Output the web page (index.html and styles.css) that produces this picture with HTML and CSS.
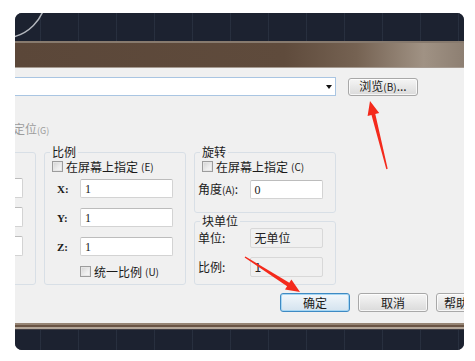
FILE: index.html
```html
<!DOCTYPE html>
<html>
<head>
<meta charset="utf-8">
<link rel="stylesheet" href="styles.css">
</head>
<body>
<div class="frame">
  <div class="canvas canvas-top">
    <svg class="arc" width="449" height="28" viewBox="0 0 449 28"><circle cx="-12" cy="-18" r="43" fill="none" stroke="#b3b7bd" stroke-width="1.5"/></svg>
  </div>
  <div class="titlebar"></div>
  <div class="dialog">
    <div class="path-row">
      <div class="combo"><span class="caret"></span></div>
      <button class="btn browse">浏览<small>(B)</small>...</button>
    </div>
    <div class="geo">定位<small>(G)</small></div>
    <div class="groups">
      <div class="grp-ins">
        <span class="input"></span>
        <span class="input"></span>
        <span class="input"></span>
      </div>
      <fieldset class="grp grp-scale">
        <legend>比例</legend>
        <div class="chk"><span class="box"></span>在屏幕上指定<small>(E)</small></div>
        <div class="row xyz first"><span class="lbl serif">X:</span><span class="input">1</span></div>
        <div class="row xyz"><span class="lbl serif">Y:</span><span class="input">1</span></div>
        <div class="row xyz"><span class="lbl serif">Z:</span><span class="input">1</span></div>
        <div class="chk uniform"><span class="box"></span>统一比例<small>(U)</small></div>
      </fieldset>
      <div class="col">
        <fieldset class="grp grp-rot">
          <legend>旋转</legend>
          <div class="chk"><span class="box"></span>在屏幕上指定<small>(C)</small></div>
          <div class="row side angle"><span class="lbl">角度<small>(A)</small>:</span><span class="input">0</span></div>
        </fieldset>
        <fieldset class="grp grp-unit">
          <legend>块单位</legend>
          <div class="row side"><span class="lbl">单位:</span><span class="input ro">无单位</span></div>
          <div class="row side second"><span class="lbl">比例:</span><span class="input ro">1</span></div>
        </fieldset>
      </div>
    </div>
    <div class="actions">
      <button class="btn primary">确定</button>
      <button class="btn">取消</button>
      <button class="btn help">帮助</button>
    </div>
  </div>
  <div class="canvas canvas-bottom"></div>
</div>
<svg class="arrows" width="475" height="361" viewBox="0 0 475 361">
  <polygon fill="#f42a1c" points="370,101 379.2,113.1 375.3,114.1 387.7,168.8 386.3,169.2 371.5,115.1 367.6,116.1"/>
  <polygon fill="#f42a1c" points="300,292 285,289.6 287.1,286.2 244.6,257.6 245.4,256.4 289.3,282.8 291.4,279.4"/>
</svg>
</body>
</html>
```

FILE: styles.css
```css
* { box-sizing: border-box; }
html, body { margin: 0; padding: 0; background: #fff; }
body {
  font-family: "Noto Sans CJK SC", "Noto Sans", sans-serif;
  font-size: 12px;
  line-height: 14px;
  color: #1a1a1a;
  width: 475px;
  height: 361px;
  overflow: hidden;
  position: relative;
}
small { font-size: 10px; }

.frame {
  margin: 13px 0 0 15px;
  width: 449px;
  height: 337px;
  border-radius: 7px;
  overflow: hidden;
  display: flex;
  flex-direction: column;
  background: #1c2230;
}
.canvas {
  background-color: #1c2230;
  background-image: linear-gradient(90deg, rgba(120, 135, 160, 0.13) 1px, transparent 1px);
  background-size: 38px 100%;
  background-position: 25px 0;
}
.canvas-top { height: 28px; flex: none; }
.arc { display: block; }
.titlebar {
  height: 27px;
  flex: none;
  border-top: 2px solid #877a6e;
  border-bottom: 1px solid #a69b91;
  background: linear-gradient(90deg, #5b4739 0%, #5f4b3c 60%, #756252 76%, #a09284 91%, #8d7f72 100%);
}
.canvas-bottom {
  height: 27px;
  flex: none;
  background:
    linear-gradient(#958474 0 2px, #6a5444 2px 4px, #b3a699 4px 6px, #3f3d44 6px 7px, transparent 7px),
    linear-gradient(90deg, rgba(120, 135, 160, 0.13) 1px, transparent 1px) 25px 0 / 38px 100%,
    #1c2230;
}

.dialog {
  flex: 1;
  background: #f0f0f0;
  padding-top: 9px;
  overflow: hidden;
}
.path-row { display: flex; align-items: center; height: 19px; }
.combo {
  margin-left: -2px;
  width: 323px;
  height: 19px;
  background: #fff;
  border: 1px solid #a9c5e2;
  display: flex;
  align-items: center;
  justify-content: flex-end;
  padding-right: 3px;
}
.caret {
  width: 0; height: 0;
  border-left: 3px solid transparent;
  border-right: 3px solid transparent;
  border-top: 4px solid #111;
}
.btn {
  font-family: "Noto Sans CJK SC", "Noto Sans", sans-serif;
  font-size: 12px;
  line-height: 14px;
  color: #1a1a1a;
  width: 70px;
  height: 19px;
  padding: 0;
  border: 1px solid #a8a8a8;
  border-radius: 3px;
  background: linear-gradient(#f5f5f5, #e8e8e8 50%, #dadada);
  box-shadow: inset 0 0 0 1px rgba(255, 255, 255, 0.75);
}
.browse { margin-left: 12px; height: 18px; }
.geo { margin-top: 26px; height: 14px; margin-left: -2px; color: #9c9c9c; }
.geo small { font-size: 9px; }

.groups { display: flex; gap: 8px; height: 140px; margin-top: 9px; }
.grp-ins {
  width: 30px;
  margin-left: -9px;
  margin-top: 7px;
  border: 1px solid #d8dfe6;
  border-radius: 3px;
  padding: 25px 12px 0 0;
  display: flex;
  flex-direction: column;
  gap: 9px;
}
.grp-ins .input { width: 100%; height: 20px; }

fieldset.grp {
  margin: 0;
  min-width: 0;
  border: 1px solid #d8dfe6;
  border-radius: 3px;
  padding: 0 12px 0 7px;
}
legend {
  padding: 0 2px;
  margin-left: -2px;
  height: 14px;
  line-height: 14px;
  color: #1a1a1a;
}
.grp-scale { width: 142px; }
.col { width: 142px; display: flex; flex-direction: column; gap: 1px; }
.grp-rot { height: 68px; flex: none; }
.grp-unit { flex: 1; }

.chk { display: flex; align-items: center; height: 13px; margin-top: 1px; gap: 3px; white-space: nowrap; }
.box {
  width: 11px; height: 11px; flex: none;
  border: 1px solid #9c9c9c;
  background: linear-gradient(135deg, #d2d2d2, #eeeeee 60%, #f8f8f8);
  box-shadow: inset 0 0 0 1px #e6e6e6;
}
.uniform { margin-top: 9px; margin-left: 28px; }

.row { display: flex; align-items: center; }
.lbl { white-space: nowrap; }
.serif { font-family: "Liberation Serif", serif; font-weight: bold; font-size: 11px; }
.input {
  display: flex;
  align-items: center;
  background: #fff;
  border: 1px solid #d3d3d3;
  border-top-color: #bcbcbc;
  border-radius: 2px;
  padding-left: 4px;
  font-family: "Liberation Serif", serif;
  font-size: 12px;
  color: #222;
}
.xyz { margin-left: 5px; margin-top: 10px; }
.xyz.first { margin-top: 6px; }
.xyz .lbl { width: 23px; }
.xyz .input { width: 93px; height: 19px; }

.side { margin-left: -4px; }
.side .lbl { width: 52px; }
.side .input { width: 74px; height: 20px; }
.angle { margin-top: 7px; }
.angle .input { height: 19px; }
.input.ro {
  background: #f0f0f0;
  border-color: #d8d8d8;
  font-family: "Noto Sans CJK SC", sans-serif;
}
.second { margin-top: 9px; }

.actions { display: flex; gap: 8px; margin-top: 8px; padding-left: 265px; }
.actions .btn { flex: none; }
.primary {
  border-color: #3e8ac3;
  box-shadow: inset 0 0 0 1px #a6d6f3;
  background: linear-gradient(#f3f8fc, #e3edf5 50%, #d4e3ef);
}
.help { text-align: left; padding-left: 7px; }

.arrows { position: absolute; left: 0; top: 0; pointer-events: none; }
```
